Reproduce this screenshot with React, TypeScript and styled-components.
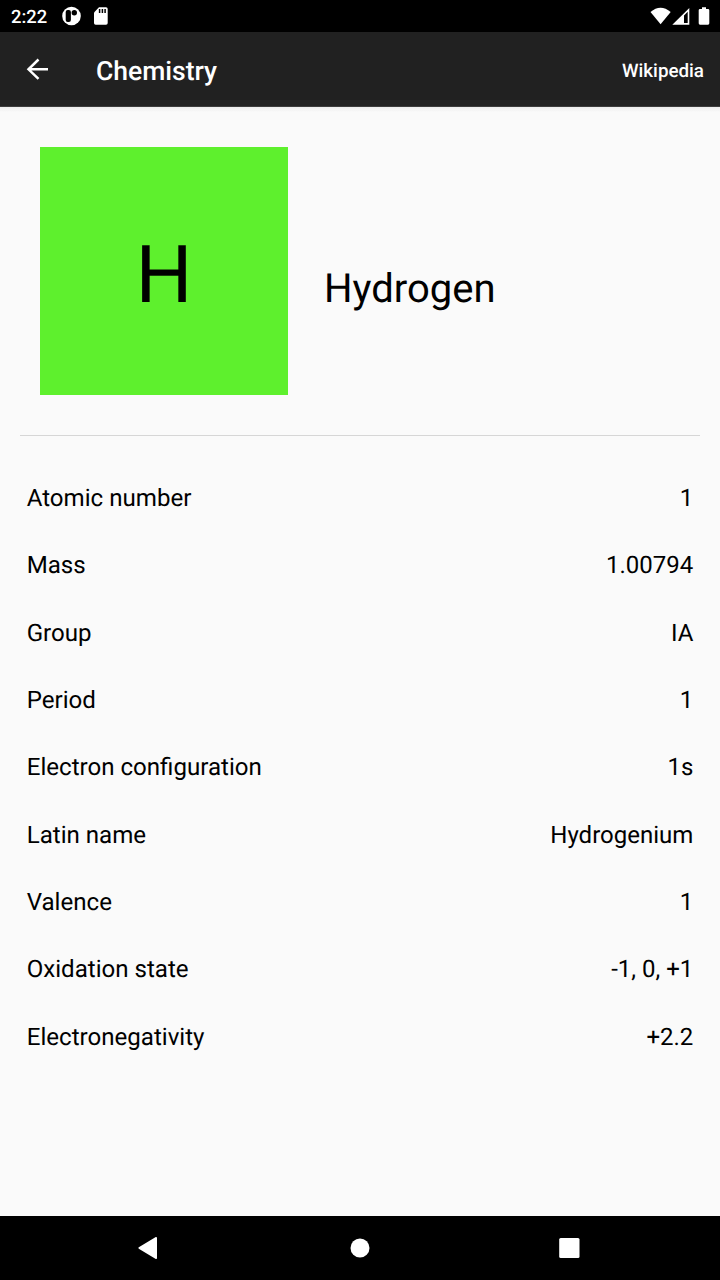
import React from "react";
import styled, { createGlobalStyle } from "styled-components";

const GlobalStyle = createGlobalStyle`
  * { box-sizing: border-box; }
  body { margin: 0; font-family: Roboto, sans-serif; text-rendering: geometricPrecision; }
`;
const Screen = styled.div`
  width: 720px; height: 1280px; display: flex; flex-direction: column; background: #fafafa; color: #000; overflow: hidden;
`;
const StatusBar = styled.header`
  height: 32px; flex: none; display: flex; align-items: center; justify-content: space-between;
  padding: 0 9px 0 11px; background: #000; color: #fff;
`;
const StatusGroup = styled.div`display: flex; align-items: center; height: 32px;`;
const Clock = styled.span`font-size: 18.4px; font-weight: 500; line-height: 22px; padding-top: 4px; width: 50px;`;
const AppBar = styled.div`
  height: 75px; flex: none; display: flex; align-items: center; background: #212121; color: #fff;
  padding: 0 16px 0 24px; border-bottom: 1px solid #3c3c3c;
`;
const Title = styled.h1`
  margin: 0 auto 0 46px; padding-top: 5px; font-size: 26.5px; font-weight: 500; line-height: 32px;
`;
const Action = styled.span`font-size: 18.8px; font-weight: 500; line-height: 24px; padding-top: 3px;`;
const Content = styled.main`
  flex: 1; padding: 40px 20px 0; background: linear-gradient(#ececec, #fafafa 5px);
`;
const Hero = styled.section`
  display: flex; height: 289px; padding-left: 20px; border-bottom: 1px solid #d6d6d6;
`;
const Tile = styled.div`
  width: 248px; height: 248px; background: #5ef02d; display: flex; justify-content: center;
  font-size: 80px; line-height: 94px; padding-top: 81px;
`;
const Name = styled.h2`margin: 0; padding: 118px 0 0 36px; font-size: 40px; line-height: 47px; font-weight: 400;`;
const Facts = styled.dl`margin: 28.3px 6.7px 0;`;
const Fact = styled.div`display: flex; justify-content: space-between; height: 67.33px; align-items: center;`;
const Label = styled.dt`font-size: 24.1px; line-height: 28px;`;
const Value = styled.dd`margin: 0; font-size: 24px; line-height: 28px;`;
const NavBar = styled.nav`height: 64px; flex: none; background: #000; display: flex; align-items: center; justify-content: center;`;

const facts = [
  ["Atomic number", "1"],
  ["Mass", "1.00794"],
  ["Group", "IA"],
  ["Period", "1"],
  ["Electron configuration", "1s"],
  ["Latin name", "Hydrogenium"],
  ["Valence", "1"],
  ["Oxidation state", "-1, 0, +1"],
  ["Electronegativity", "+2.2"],
];

export default function App() {
  return (
    <Screen>
      <GlobalStyle />
      <StatusBar>
        <StatusGroup>
          <Clock>2:22</Clock>
          <svg width="60" height="32" viewBox="61 0 60 32">
            <circle cx="71.5" cy="16" r="9.3" fill="#fff" />
            <rect x="65.7" y="10" width="5.2" height="12" rx="2" fill="#000" />
            <circle cx="74.3" cy="12.7" r="2.7" fill="#000" />
            <path d="M99 7.3h7q1.7 0 1.7 1.7v14q0 1.7-1.7 1.7H95.7q-1.7 0-1.7-1.7V12.5z" fill="#fff" />
            <path d="M99.6 9v4M102.4 9v4M105.1 9v4" stroke="#000" strokeWidth="1.5" />
          </svg>
        </StatusGroup>
        <svg width="62" height="32" viewBox="649 0 62 32" fill="#fff">
          <path d="M650.5 12Q660.5 3.5 670.7 12L660.6 24.2Z" />
          <path fillRule="evenodd" d="M672.3 24.8L689.3 8V24.8ZM684 15.4V23H687.7V11.7Z" />
          <path d="M700 9h2V7.3h4V9h2q1.3 0 1.3 1.3v13q0 1.4-1.3 1.4h-8q-1.3 0-1.3-1.4v-13Q698.7 9 700 9z" />
        </svg>
      </StatusBar>
      <AppBar>
        <svg width="26" height="26" viewBox="24 56.2 26 26">
          <path d="M48 69.5H28.5M38.5 59.7L28.5 69.5l10 9.6" fill="none" stroke="#fff" strokeWidth="2.5" />
        </svg>
        <Title>Chemistry</Title>
        <Action>Wikipedia</Action>
      </AppBar>
      <Content>
        <Hero><Tile>H</Tile><Name>Hydrogen</Name></Hero>
        <Facts>
          {facts.map(([k, v]) => (
            <Fact key={k}><Label>{k}</Label><Value>{v}</Value></Fact>
          ))}
        </Facts>
      </Content>
      <NavBar>
        <svg width="480" height="64" viewBox="120 0 480 64" fill="#fff">
          <path d="M139.2 32L156.2 21.8V42.2Z" stroke="#fff" strokeWidth="1.6" strokeLinejoin="round" />
          <circle cx="360" cy="32" r="9.5" />
          <rect x="559.2" y="22" width="20.3" height="20" rx="1.5" />
        </svg>
      </NavBar>
    </Screen>
  );
}
